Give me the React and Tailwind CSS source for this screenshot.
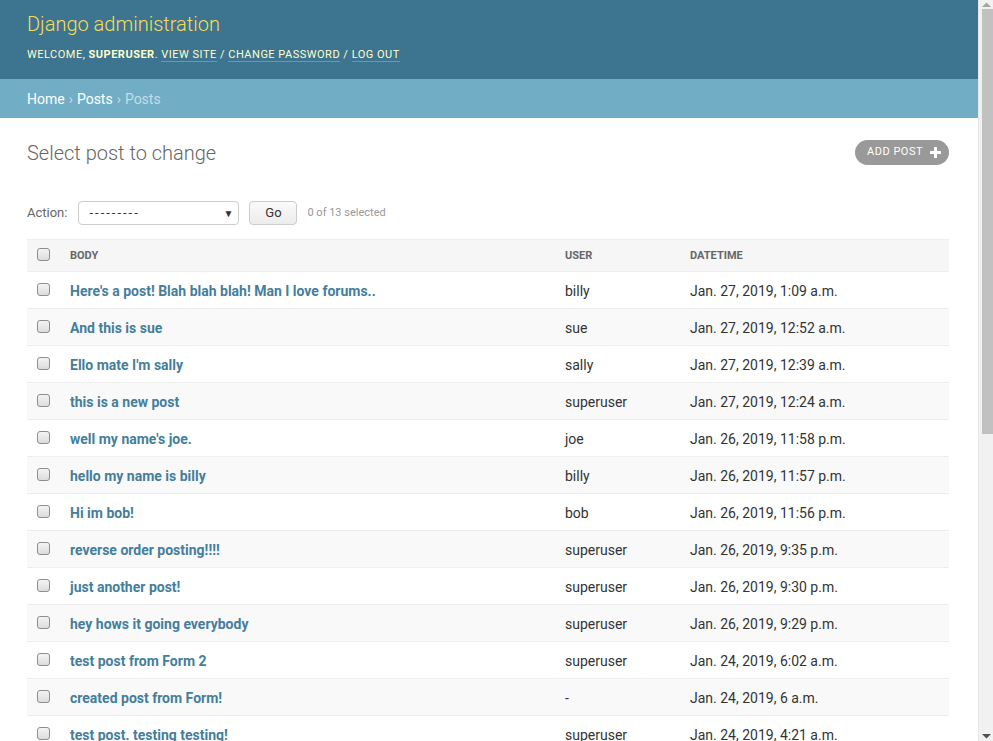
const posts = [
  ["Here's a post! Blah blah blah! Man I love forums..", "billy", "Jan. 27, 2019, 1:09 a.m."],
  ["And this is sue", "sue", "Jan. 27, 2019, 12:52 a.m."],
  ["Ello mate I'm sally", "sally", "Jan. 27, 2019, 12:39 a.m."],
  ["this is a new post", "superuser", "Jan. 27, 2019, 12:24 a.m."],
  ["well my name's joe.", "joe", "Jan. 26, 2019, 11:58 p.m."],
  ["hello my name is billy", "billy", "Jan. 26, 2019, 11:57 p.m."],
  ["Hi im bob!", "bob", "Jan. 26, 2019, 11:56 p.m."],
  ["reverse order posting!!!!", "superuser", "Jan. 26, 2019, 9:35 p.m."],
  ["just another post!", "superuser", "Jan. 26, 2019, 9:30 p.m."],
  ["hey hows it going everybody", "superuser", "Jan. 26, 2019, 9:29 p.m."],
  ["test post from Form 2", "superuser", "Jan. 24, 2019, 6:02 a.m."],
  ["created post from Form!", "-", "Jan. 24, 2019, 6 a.m."],
  ["test post. testing testing!", "superuser", "Jan. 24, 2019, 4:21 a.m."],
];

function Box() {
  return (
    <span className="block h-[13px] w-[13px] rounded-[3px] border border-[#8e8e8e] bg-gradient-to-b from-[#f4f4f4] to-[#dcdcdc]" />
  );
}

const cols = "grid grid-cols-[35px_495px_125px_1fr] items-center";

function Scrollbar() {
  return (
    <div className="flex h-full w-[15px] shrink-0 flex-col items-center border-l border-[#e8e8e8] bg-[#f1f1f1]">
      <svg width="9" height="6" viewBox="0 0 9 6" className="mt-[2px] mb-[1px]">
        <path d="M0 5 L4.5 0.5 L9 5 Z" fill="#a3a3a3" />
      </svg>
      <div className="ml-[2px] h-[425px] w-[11px] bg-[#c1c1c1]" />
      <div className="flex-1" />
      <svg width="9" height="6" viewBox="0 0 9 6" className="mb-[2px]">
        <path d="M0 1 L4.5 5.5 L9 1 Z" fill="#505050" />
      </svg>
    </div>
  );
}

export default function App() {
  return (
    <div className="flex h-screen overflow-hidden bg-white font-['Roboto',sans-serif] text-[#333]">
      <div className="min-w-0 flex-1 overflow-hidden">
        <header className="h-[79px] bg-[#3d7490] px-[27px] pt-[10px]">
          <h1 className="text-[20px] leading-[28px] font-light text-[#f5dd5d]">
            Django administration
          </h1>
          <div className="mt-[9px] text-[11px] tracking-[0.5px] uppercase text-[#ffc]">
            Welcome, <strong className="font-bold">superuser</strong>.{" "}
            <a className="border-b border-white/25">View site</a> /{" "}
            <a className="border-b border-white/25">Change password</a> /{" "}
            <a className="border-b border-white/25">Log out</a>
          </div>
        </header>

        <div className="flex h-[39px] items-center bg-[#71aec5] px-[27px] pt-[2px] text-[14px] text-[#c4dce8]">
          <a className="text-white">Home</a>
          <span className="mx-[4px]">›</span>
          <a className="text-white">Posts</a>
          <span className="mx-[4px]">›</span>
          <span>Posts</span>
        </div>

        <main className="pl-[27px] pr-[29px]">
          <div className="flex items-center justify-between pt-[20px]">
            <h2 className="text-[20px] font-light text-[#666]">Select post to change</h2>
            <a className="-mt-[2px] flex h-[25px] items-center gap-[7px] rounded-full bg-[#999] pl-[12px] pr-[8px] text-[11px] tracking-[0.5px] text-white uppercase">
              Add post
              <svg width="11" height="11" viewBox="0 0 11 11" fill="white">
                <rect x="4" y="0" width="3" height="11" rx="0.5" />
                <rect x="0" y="4" width="11" height="3" rx="0.5" />
              </svg>
            </a>
          </div>

          <div className="mt-[33px] flex items-center text-[13px] text-[#666]">
            <span>Action:</span>
            <div className="ml-[11px] flex h-[24px] w-[161px] items-center justify-between rounded-[4px] border border-[#ccc] bg-white pl-[10px] pr-[5px] text-[#333]">
              <span className="tracking-[2px]">---------</span>
              <span className="text-[10px]">▼</span>
            </div>
            <button className="ml-[10px] h-[24px] w-[48px] rounded-[4px] border border-[#ccc] bg-gradient-to-b from-[#fafafa] to-[#ececec] text-[13px] text-[#333]">
              Go
            </button>
            <span className="ml-[10px] text-[11px] text-[#999]">0 of 13 selected</span>
          </div>

          <div className="mt-[14px] text-[14px]">
            <div className={`${cols} h-[33px] border-y border-[#eee] bg-[#f6f6f6] pt-[2px] text-[11px] font-bold text-[#666] uppercase`}>
              <div className="pl-[10px] pb-[4px]"><Box /></div>
              <div className="px-[8px]">Body</div>
              <div className="px-[8px]">User</div>
              <div className="px-[8px]">Datetime</div>
            </div>
            {posts.map(([body, user, dt], i) => (
              <div
                key={body}
                className={`${cols} h-[37px] border-b border-[#eee] pt-[2px] ${i % 2 ? "bg-[#f9f9f9]" : "bg-white"}`}
              >
                <div className="pl-[10px] pb-[4px]"><Box /></div>
                <div className="px-[8px] font-bold text-[#447e9b]">{body}</div>
                <div className="px-[8px]">{user}</div>
                <div className="px-[8px]">{dt}</div>
              </div>
            ))}
          </div>
          <div className="h-[40px]" />
        </main>
      </div>
      <Scrollbar />
    </div>
  );
}
